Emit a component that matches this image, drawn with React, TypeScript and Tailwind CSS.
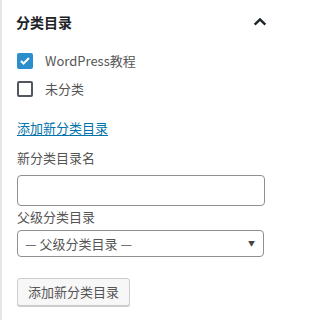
export default function App() {
  return (
    <div
      className="w-[280px] h-[320px] bg-white border-l-2 border-[#e5e5e5] text-[13px] text-[#444]"
      style={{ fontFamily: '"Noto Sans CJK SC", "Noto Sans", sans-serif' }}
    >
      {/* Header */}
      <div className="flex items-center justify-between pl-[14px] pr-[12px] h-[44px]">
        <h2 className="text-[14px] font-bold text-[#1d2327]">分类目录</h2>
        <svg className="w-[16px] h-[16px]" viewBox="0 0 24 24" fill="none" stroke="#1d2327" strokeWidth={3.5}>
          <path d="M4 16l8-8 8 8" />
        </svg>
      </div>

      <div className="pl-[15px] pr-[14px]">
        {/* Checkboxes */}
        <ul className="mt-[9px] space-y-[12px]">
          <li className="flex items-center h-[16px]">
            <span className="w-[16px] h-[16px] rounded-[2px] bg-[#2c8ecb] flex items-center justify-center">
              <svg className="w-[12px] h-[12px]" viewBox="0 0 24 24" fill="none" stroke="white" strokeWidth={4}>
                <path d="M4 12l5 5 11-11" />
              </svg>
            </span>
            <span className="ml-[12px] text-[13px] text-[#555]">WordPress教程</span>
          </li>
          <li className="flex items-center h-[16px]">
            <span className="w-[16px] h-[16px] rounded-[2px] border-2 border-[#50575e]" />
            <span className="ml-[12px] text-[13px] text-[#555]">未分类</span>
          </li>
        </ul>

        {/* Add new */}
        <a className="block mt-[21px] text-[13px] text-[#0073aa] underline underline-offset-2">添加新分类目录</a>

        <label className="block mt-[10px] text-[13px] text-[#555]">新分类目录名</label>
        <input className="block mt-[8px] w-[248px] h-[31px] border border-[#8c8f94] rounded-[4px] bg-white" />

        <label className="block text-[13px] text-[#555] leading-[22px]">父级分类目录</label>
        <div className="mt-[2px] w-[247px] h-[27px] border border-[#8c8f94] rounded-[4px] flex items-center justify-between pl-[7px] pr-[8px]">
          <span className="text-[13px] text-[#555]">— 父级分类目录 —</span>
          <span className="text-[7px] text-[#444]">▼</span>
        </div>

        <button className="mt-[21px] h-[28px] px-[10px] border border-[#ccc] rounded-[3px] bg-[#f7f7f7] text-[13px] text-[#555] shadow-[0_1px_0_#ccc]">
          添加新分类目录
        </button>
      </div>
    </div>
  );
}
